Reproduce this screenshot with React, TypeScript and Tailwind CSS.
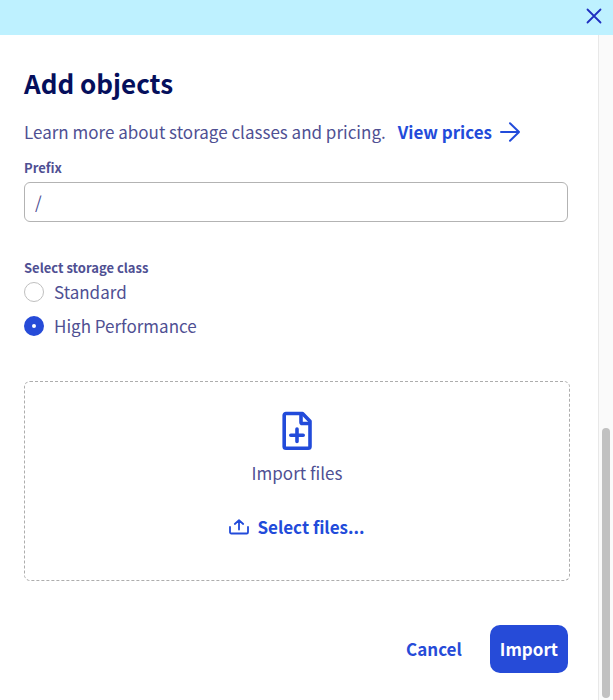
import { useState } from 'react';

const storageClasses = [
  { value: 'standard', label: 'Standard' },
  { value: 'high-performance', label: 'High Performance' },
];

function CloseIcon() {
  return (
    <svg width="16" height="16" viewBox="0 0 16 16" fill="none" stroke="currentColor" strokeWidth="1.8" strokeLinecap="round" aria-hidden="true">
      <path d="M1.5 1.5l13 13M14.5 1.5l-13 13" />
    </svg>
  );
}

function ArrowIcon() {
  return (
    <svg width="20" height="20" viewBox="0 0 20 20" fill="none" stroke="currentColor" strokeWidth="2" strokeLinecap="round" strokeLinejoin="round" aria-hidden="true">
      <path d="M1 10h18M10 1.2l9 8.8-9 8.8" />
    </svg>
  );
}

function FileIcon() {
  return (
    <svg width="30" height="40" viewBox="0 0 30 40" fill="none" stroke="currentColor" strokeWidth="3.6" strokeLinecap="round" strokeLinejoin="round" aria-hidden="true">
      <path d="M4 2.5h16.500l7.500 7.800V35.500a1.800 1.800 0 0 1-1.800 1.800H4A1.800 1.800 0 0 1 2.200 35.500V4.300A1.800 1.800 0 0 1 4 2.500z" />
      <path d="M19 3v8.200a1.300 1.300 0 0 0 1.300 1.300h7" />
      <path d="M15 18v12.400M8.800 24.200h12.400" />
    </svg>
  );
}

function UploadIcon() {
  return (
    <svg width="20" height="16" viewBox="0 0 20 16" fill="none" stroke="currentColor" strokeWidth="1.8" strokeLinecap="round" strokeLinejoin="round" aria-hidden="true">
      <path d="M1 8v5.200a1.300 1.300 0 0 0 1.300 1.300h15.400a1.300 1.300 0 0 0 1.300-1.300V8" />
      <path d="M10 10.500V1.500M5.800 5L10 1.300 14.200 5" />
    </svg>
  );
}

export default function App() {
  const [prefix, setPrefix] = useState('/');
  const [storageClass, setStorageClass] = useState('high-performance');

  return (
    <div className="flex min-h-screen flex-col bg-white font-['Noto_Sans_CJK_SC',sans-serif] text-[17px] leading-7 text-[#4f5093]">
      <header className="flex h-[35px] items-center justify-end bg-[#bef1ff] pr-[11px] pb-1">
        <button type="button" aria-label="Close" className="text-[#1f2fc0]">
          <CloseIcon />
        </button>
      </header>

      <div className="flex grow">
        <form className="min-w-0 grow pt-7 pr-7 pb-6 pl-6" onSubmit={(e) => e.preventDefault()}>
          <h1 className="text-[26px] leading-10 font-bold text-[#050f5c]">Add objects</h1>

          <p className="mt-[15px] flex flex-wrap items-center gap-x-3">
            Learn more about storage classes and pricing.
            <a href="#prices" className="flex items-center gap-2 font-bold text-[#224bda]">
              View prices
              <ArrowIcon />
            </a>
          </p>

          <div className="mt-3 pr-0.5">
            <label htmlFor="prefix" className="block text-[13px] leading-5 font-bold">
              Prefix
            </label>
            <input
              id="prefix"
              type="text"
              value={prefix}
              onChange={(e) => setPrefix(e.target.value)}
              className="mt-1 block h-10 w-full rounded-md border border-[#b3b3b3] px-2.5 pb-0.5 outline-none"
            />
          </div>

          <fieldset className="mt-9">
            <legend className="text-[13px] leading-5 font-bold">Select storage class</legend>
            <div className="flex flex-col gap-1.5">
              {storageClasses.map((item) => (
                <label key={item.value} className="flex items-center gap-2.5">
                  <input
                    type="radio"
                    name="storage-class"
                    value={item.value}
                    checked={storageClass === item.value}
                    onChange={() => setStorageClass(item.value)}
                    className="size-5 appearance-none rounded-full border border-[#bfbfbf] bg-white checked:border-8 checked:border-[#264bd8]"
                  />
                  {item.label}
                </label>
              ))}
            </div>
          </fieldset>

          <div className="mt-[41px] flex h-[200px] flex-col items-center rounded-md border border-dashed border-[#adadad] pt-[29px]">
            <span className="text-[#224bda]">
              <FileIcon />
            </span>
            <p className="mt-2">Import files</p>
            <button type="button" className="mt-[26px] flex items-center gap-2 font-bold text-[#224bda]">
              <UploadIcon />
              Select files...
            </button>
          </div>

          <div className="mt-11 flex justify-end gap-4 pr-0.5 font-bold">
            <button type="button" className="h-12 px-3 text-[#264bd8]">
              Cancel
            </button>
            <button type="submit" className="h-12 rounded-[10px] bg-[#264bd8] px-2.5 text-white">
              Import
            </button>
          </div>
        </form>

        <div className="flex w-[15px] shrink-0 flex-col justify-end border-l border-[#e8e8e8] bg-[#fafafa] px-[3px] pb-0.5" aria-hidden="true">
          <div className="h-[270px] rounded-full bg-[#c1c1c1]" />
        </div>
      </div>
    </div>
  );
}
